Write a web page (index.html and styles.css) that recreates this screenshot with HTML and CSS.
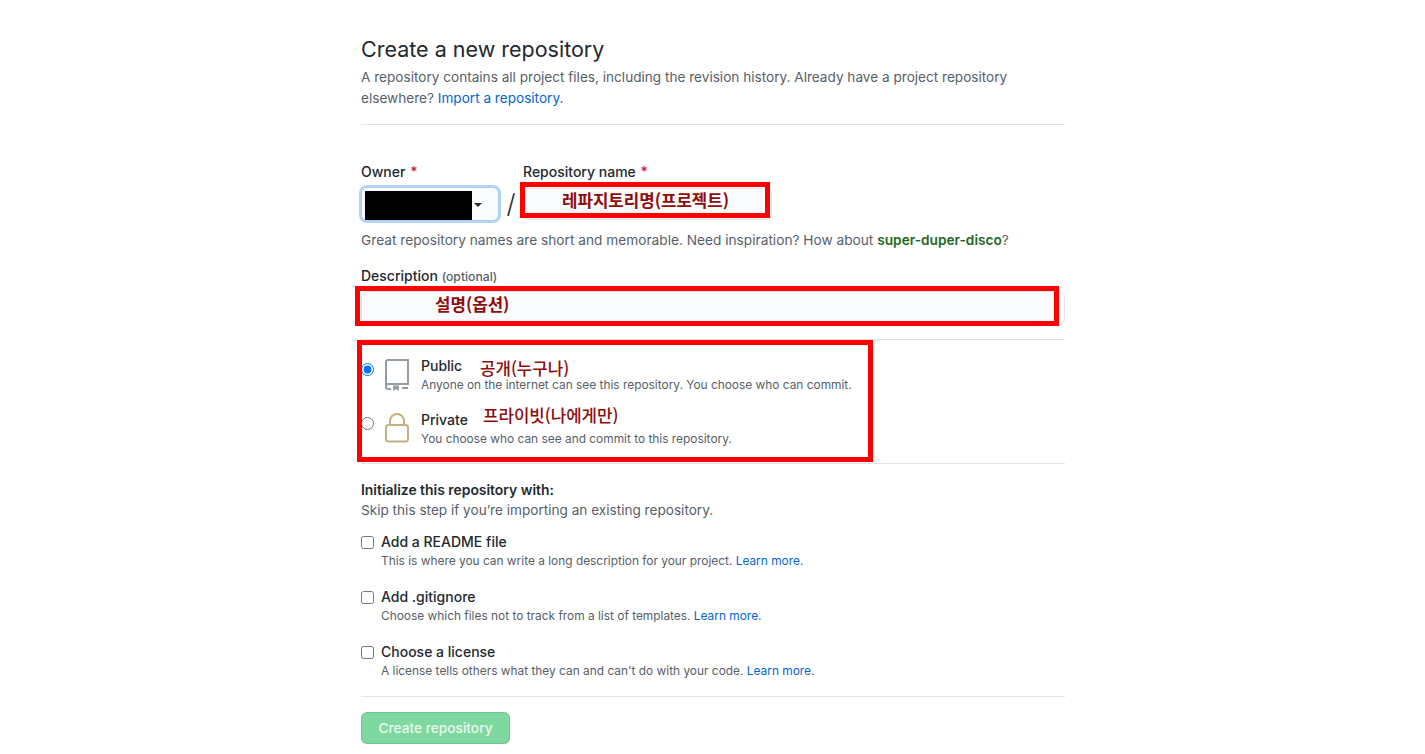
FILE: index.html
```html
<!DOCTYPE html>
<html lang="ko">
<head>
    <meta charset="UTF-8">
    <title>Create a new repository</title>
    <link rel="stylesheet" href="styles.css">
</head>
<body>
    <main class="page">
        <div class="head">
            <h2 class="title">Create a new repository</h2>
            <p class="lead">A repository contains all project files, including the revision history. Already have a project repository elsewhere? <a href="#">Import a repository.</a></p>
        </div>

        <div class="names">
            <div>
                <div class="label">Owner <span class="req">*</span></div>
                <div class="owner"><span class="blackout"></span><span class="caret"></span></div>
            </div>
            <div class="slash">/</div>
            <div>
                <div class="label">Repository name <span class="req">*</span></div>
                <div class="input name-input"></div>
            </div>
        </div>
        <p class="hint">Great repository names are short and memorable. Need inspiration? How about <b class="green">super-duper-disco</b>?</p>

        <div class="label desc-label">Description <span class="optional">(optional)</span></div>
        <div class="input desc-input"></div>

        <div class="visibility">
            <div class="vis-row">
                <input type="radio" name="vis" class="radio" checked>
                <svg class="vis-icon" width="24" height="32" viewBox="0 0 24 32" fill="none" stroke="#959da5" stroke-width="2">
                    <path d="M1 26V3a2 2 0 0 1 2-2h20v24H3a2 2 0 0 0-2 2v1a2 2 0 0 0 2 2h3"/>
                    <path d="M17 29h6"/>
                    <path d="M8 26.5h6V32l-3-2-3 2z" fill="#959da5" stroke="none"/>
                </svg>
                <div class="vis-text">
                    <div class="opt-title">Public</div>
                    <div class="note">Anyone on the internet can see this repository. You choose who can commit.</div>
                </div>
            </div>
            <div class="vis-row">
                <input type="radio" name="vis" class="radio">
                <svg class="vis-icon" width="24" height="30" viewBox="0 0 24 30" fill="none" stroke="#c2b280" stroke-width="2">
                    <path d="M5 12V8a7 7 0 0 1 14 0v4"/>
                    <rect x="1" y="12" width="22" height="16.5" rx="2.5"/>
                </svg>
                <div class="vis-text">
                    <div class="opt-title">Private</div>
                    <div class="note">You choose who can see and commit to this repository.</div>
                </div>
            </div>
        </div>

        <div class="init">
            <div class="init-title">Initialize this repository with:</div>
            <p class="skip">Skip this step if you’re importing an existing repository.</p>
            <div class="check-row">
                <input type="checkbox" class="check">
                <div>
                    <div class="opt-title">Add a README file</div>
                    <div class="note">This is where you can write a long description for your project. <a href="#">Learn more.</a></div>
                </div>
            </div>
            <div class="check-row">
                <input type="checkbox" class="check">
                <div>
                    <div class="opt-title">Add .gitignore</div>
                    <div class="note">Choose which files not to track from a list of templates. <a href="#">Learn more.</a></div>
                </div>
            </div>
            <div class="check-row">
                <input type="checkbox" class="check">
                <div>
                    <div class="opt-title">Choose a license</div>
                    <div class="note">A license tells others what they can and can't do with your code. <a href="#">Learn more.</a></div>
                </div>
            </div>
        </div>

        <div class="foot">
            <button class="create">Create repository</button>
        </div>

        <!-- red notes drawn over the screenshot -->
        <div class="mark mark-name"></div>
        <div class="mark mark-desc"></div>
        <div class="mark mark-vis"></div>
        <span class="memo memo-name">레파지토리명(프로젝트)</span>
        <span class="memo memo-desc">설명(옵션)</span>
        <span class="memo memo-public">공개(누구나)</span>
        <span class="memo memo-private">프라이빗(나에게만)</span>
    </main>
</body>
</html>
```

FILE: styles.css
```css
* {
    box-sizing: border-box;
}
html, body {
    margin: 0;
    background: #fff;
}
body {
    font-family: Inter, "Liberation Sans", "Noto Sans CJK KR", sans-serif;
    font-size: 13.6px;
    color: #24292e;
    height: 754px;
    overflow: hidden;
}
a {
    color: #0366d6;
    text-decoration: none;
}
.page {
    position: relative;
    width: 704px;
    margin-left: 361px;
}
.head {
    padding-top: 35px;
    padding-bottom: 15px;
    border-bottom: 1px solid #e1e4e8;
}
.title {
    margin: 0;
    font-size: 21.5px;
    font-weight: 400;
    line-height: 29px;
}
.lead {
    margin: 3px 0 0;
    color: #586069;
    line-height: 21px;
    width: 660px;
}
.names {
    display: flex;
    margin-top: 38px;
}
.label {
    font-weight: 500;
    font-size: 14px;
    line-height: 18px;
}
.req {
    color: #cb2431;
    margin-left: 1px;
}
.owner {
    position: relative;
    width: 138px;
    height: 34px;
    margin-top: 6px;
    border: 1px solid #a9cdf3;
    box-shadow: 0 0 0 2px #b4d5f7;
    border-radius: 6px;
    background: #fafbfc;
}
.blackout {
    position: absolute;
    left: 3px;
    top: 3px;
    width: 107px;
    height: 29px;
    background: #000;
}
.caret {
    position: absolute;
    left: 112px;
    top: 15px;
    border: 4px solid transparent;
    border-top-color: #24292e;
    border-bottom: 0;
}
.slash {
    width: 24px;
    text-align: center;
    font-size: 26px;
    font-weight: 300;
    padding-top: 25px;
    color: #24292e;
}
.input {
    height: 34px;
    background: #fafbfc;
    border: 1px solid #e1e4e8;
    border-radius: 6px;
}
.name-input {
    width: 249px;
    height: 32px;
    margin-top: 7px;
}
.hint {
    margin: 9px 0 0;
    color: #586069;
    font-size: 13.7px;
    line-height: 21px;
}
.green {
    color: #22691f;
    font-weight: 600;
}
.desc-label {
    margin-top: 16px;
}
.optional {
    color: #586069;
    font-size: 12.2px;
}
.desc-input {
    width: 100%;
    margin-top: 5px;
}
.visibility {
    margin-top: 14px;
    padding-top: 14px;
    padding-bottom: 1px;
    border-top: 1px solid #e1e4e8;
    border-bottom: 1px solid #e1e4e8;
}
.vis-row {
    display: flex;
    height: 54px;
}
.radio {
    width: 13px;
    height: 13px;
    margin: 9px 0 0 0;
    flex: none;
}
.vis-icon {
    flex: none;
    margin: 5px 0 0 11px;
}
.vis-text {
    margin-left: 12px;
    padding-top: 2px;
}
.opt-title {
    font-weight: 500;
    font-size: 14px;
    line-height: 20px;
}
.note {
    font-size: 11.9px;
    color: #586069;
    line-height: 16px;
    margin-top: 1px;
}
.init {
    padding-top: 17px;
    border-bottom: 1px solid #e1e4e8;
}
.init-title {
    font-weight: 600;
    font-size: 13.9px;
    line-height: 18px;
}
.skip {
    margin: 2px 0 12px;
    color: #586069;
    line-height: 19px;
}
.check-row {
    display: flex;
    height: 55px;
}
.check-row:last-child {
    height: 54px;
}
.check {
    width: 13px;
    height: 13px;
    margin: 4px 7px 0 0;
    flex: none;
}
.foot {
    padding-top: 15px;
}
.create {
    width: 149px;
    height: 32px;
    border: 1px solid rgba(27, 31, 35, .1);
    border-radius: 6px;
    background: #7fd8a0;
    color: #e9f8ef;
    font: 500 13.7px Inter, "Liberation Sans", sans-serif;
}
.mark {
    position: absolute;
    border: 5px solid #fe0000;
}
.mark-name {
    left: 159px;
    top: 182px;
    width: 250px;
    height: 36px;
}
.mark-desc {
    left: -6px;
    top: 286px;
    width: 704px;
    height: 40px;
}
.mark-vis {
    left: -4px;
    top: 340px;
    width: 516px;
    height: 122px;
}
.memo {
    position: absolute;
    font-family: "Noto Sans CJK KR", sans-serif;
    font-size: 16.8px;
    font-weight: 700;
    line-height: 18px;
    color: #8e0c0c;
    white-space: nowrap;
}
.memo-name {
    left: 201px;
    top: 191px;
}
.memo-desc {
    left: 74px;
    top: 295px;
}
.memo-public {
    left: 119px;
    top: 359px;
    font-weight: 500;
}
.memo-private {
    left: 122px;
    top: 406px;
    font-weight: 500;
}
```
